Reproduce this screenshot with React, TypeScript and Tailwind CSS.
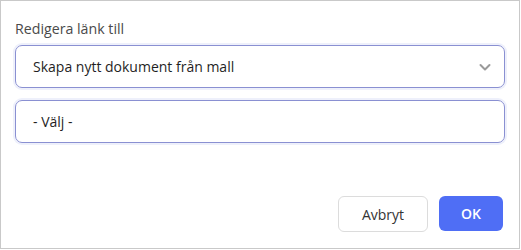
import React from "react";

export default function App() {
  return (
    <div className="w-[520px] h-[249px] border border-[#c9c9c9] bg-white flex flex-col px-[14px] pt-[18px] pb-[16px]" style={{ fontFamily: '"Open Sans", "Noto Sans", sans-serif' }}>
      <div className="text-[14.2px] leading-[20px] text-[#4a4a4a]">Redigera länk till</div>
      <div className="mt-[6px] h-[43px] rounded-[7px] border-[1.5px] border-[#8a90d2] shadow-[0_0_0_2px_#eef0fb] flex items-center justify-between pl-[17px] pr-[12px]">
        <span className="text-[14px] text-[#1f1f1f]">Skapa nytt dokument från mall</span>
        <svg width="14" height="14" viewBox="0 0 14 14" fill="none" stroke="#9a9a9a" strokeWidth="2" strokeLinecap="round" strokeLinejoin="round">
          <path d="M2.5 5l4.5 4.5L11.5 5" />
        </svg>
      </div>
      <div className="mt-[12px] h-[43px] rounded-[7px] border-[1.5px] border-[#8a90d2] shadow-[0_0_0_2px_#eef0fb] flex items-center pl-[17px]">
        <span className="text-[14px] text-[#1f1f1f]">- Välj -</span>
      </div>
      <div className="flex-1" />
      <div className="flex justify-end gap-[11px] pr-[2px]">
        <button className="w-[90px] h-[36px] rounded-[6px] border border-[#dcdcdc] bg-white text-[14px] text-[#333]">Avbryt</button>
        <button className="w-[64px] h-[35px] rounded-[6px] bg-[#4f6ef5] text-[14px] font-semibold text-white">OK</button>
      </div>
    </div>
  );
}
